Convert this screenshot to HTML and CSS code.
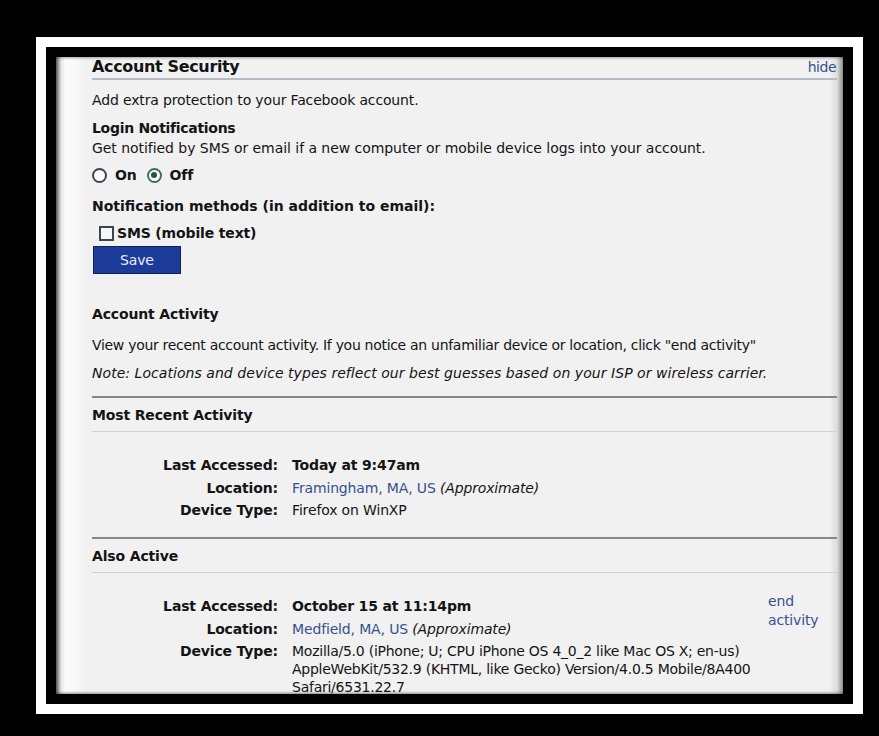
FILE: index.html
```html
<!DOCTYPE html>
<html lang="en">
<head>
<meta charset="utf-8">
<title>Account Security</title>
<link rel="stylesheet" href="styles.css">
</head>
<body>
<div class="stage">
  <div class="mat">
    <div class="panel">
      <div class="sheet">
        <div class="sec-head">
          <h1 class="sec-title">Account Security</h1>
          <a class="link hide-link" href="#">hide</a>
        </div>
        <p class="intro">Add extra protection to your Facebook account.</p>

        <h2 class="label-title login-title">Login Notifications</h2>
        <p class="hint">Get notified by SMS or email if a new computer or mobile device logs into your account.</p>

        <div class="radios">
          <span class="radio"></span><span class="radio-label">On</span>
          <span class="radio checked"></span><span class="radio-label">Off</span>
        </div>

        <h2 class="label-title methods-title">Notification methods (in addition to email):</h2>
        <div class="check-row">
          <span class="checkbox"></span><span class="check-label">SMS (mobile text)</span>
        </div>
        <button class="save-btn" type="button">Save</button>

        <h2 class="label-title activity-title">Account Activity</h2>
        <p class="activity-text">View your recent account activity. If you notice an unfamiliar device or location, click "end activity"</p>
        <p class="note">Note: Locations and device types reflect our best guesses based on your ISP or wireless carrier.</p>

        <div class="block recent">
          <h3 class="block-title">Most Recent Activity</h3>
          <dl class="session">
            <dt>Last Accessed:</dt>
            <dd class="strong">Today at 9:47am</dd>
            <dt>Location:</dt>
            <dd><a class="link" href="#">Framingham, MA, US</a> <em>(Approximate)</em></dd>
            <dt>Device Type:</dt>
            <dd>Firefox on WinXP</dd>
          </dl>
        </div>

        <div class="block also">
          <h3 class="block-title">Also Active</h3>
          <dl class="session">
            <dt>Last Accessed:</dt>
            <dd class="strong">October 15 at 11:14pm</dd>
            <dd class="end"><a class="link" href="#">end activity</a></dd>
            <dt>Location:</dt>
            <dd><a class="link" href="#">Medfield, MA, US</a> <em>(Approximate)</em></dd>
            <dt>Device Type:</dt>
            <dd class="agent">Mozilla/5.0 (iPhone; U; CPU iPhone OS 4_0_2 like Mac OS X; en-us) AppleWebKit/532.9 (KHTML, like Gecko) Version/4.0.5 Mobile/8A400 Safari/6531.22.7</dd>
          </dl>
        </div>
      </div>
    </div>
  </div>
</div>
</body>
</html>
```
FILE: styles.css
```css
* { box-sizing: border-box; }

html, body {
  margin: 0;
  background: #000;
}

body {
  font-family: "DejaVu Sans", "Liberation Sans", sans-serif;
  font-size: 14px;
  line-height: 18px;
  letter-spacing: -0.15px;
  color: #141414;
}

/* black backdrop with a white mat and a black inner edge */
.stage {
  padding: 37px 16px 22px 36px;
}

.mat {
  border: 10px solid #fff;
}

.panel {
  border: 10px solid #000;
  height: 657px;
  overflow: hidden;
  background:
    linear-gradient(to right,
      #585858 0,
      #e4e4e4 5px,
      #fbfbfb 9px,
      #f8f8f8 20px,
      #f1f1f1 30px,
      #f1f1f1 calc(100% - 14px),
      #dedede calc(100% - 6px),
      #8e8e8e 100%);
  box-shadow: inset 0 3px 3px -2px rgba(0,0,0,.35), inset 0 -3px 3px -2px rgba(0,0,0,.45);
}

.sheet {
  padding: 0 6px 0 36px;
}

.link {
  color: #35528f;
  text-decoration: none;
}

/* section header */
.sec-head {
  display: flex;
  justify-content: space-between;
  align-items: baseline;
  height: 23px;
  border-bottom: 2px solid #b6bcc6;
}

.sec-title {
  margin: 0;
  font-size: 16px;
  line-height: 20px;
  letter-spacing: -0.35px;
  font-weight: bold;
}

.hide-link {
  font-size: 14px;
  letter-spacing: -0.5px;
  margin-right: 1px;
}

p { margin: 0; }

.intro { margin-top: 11px; }

.label-title {
  margin: 0;
  font-size: 14px;
  line-height: 18px;
  font-weight: bold;
}

.login-title { margin-top: 10px; letter-spacing: -0.3px; }
.hint { margin-top: 2px; letter-spacing: -0.05px; }

/* radios */
.radios {
  display: flex;
  align-items: center;
  margin-top: 9px;
  height: 18px;
}

.radio {
  width: 15px;
  height: 15px;
  border: 2px solid #3a4658;
  border-radius: 50%;
  background: #fcfcfc;
  display: flex;
  align-items: center;
  justify-content: center;
}

.radio.checked { border-color: #3d6f62; }

.radio.checked::after {
  content: "";
  width: 6px;
  height: 6px;
  border-radius: 50%;
  background: #1f5a3a;
}

.radio-label {
  font-weight: bold;
  margin: 0 10px 0 8px;
}

.methods-title { margin-top: 13px; letter-spacing: 0; }

.check-row {
  display: flex;
  align-items: center;
  margin: 9px 0 0 7px;
  height: 18px;
}

.checkbox {
  width: 15px;
  height: 15px;
  border: 2px solid #3b4452;
  background: #f6f6f6;
  margin-right: 3px;
}

.check-label { font-weight: bold; }

.save-btn {
  display: block;
  margin: 4px 0 0 1px;
  width: 88px;
  height: 28px;
  padding: 0 0 0 26px;
  text-align: left;
  font: inherit;
  letter-spacing: -0.15px;
  font-size: 14px;
  color: #e6ecff;
  background: #1d3b98;
  border: 1px solid #0c215f;
  border-radius: 0;
}

.activity-title { margin-top: 31px; }
.activity-text { margin-top: 13px; letter-spacing: -0.3px; }

.note {
  margin-top: 10px;
  font-style: italic;
  letter-spacing: 0.05px;
}

/* activity blocks */
.block {
  border-top: 2px solid #878787;
}

.recent { margin-top: 14px; }
.also { margin-top: 18px; }

.block-title {
  margin: 0;
  padding: 8px 0 7px;
  font-size: 14px;
  line-height: 18px;
  font-weight: bold;
  border-bottom: 1px solid #d2d2d2;
}

.session {
  display: grid;
  grid-template-columns: 200px 476px auto;
  row-gap: 4.5px;
  margin: 24px 0 0;
}

.session dt {
  grid-column: 1;
  padding-right: 14px;
  text-align: right;
  font-weight: bold;
}

.session dd {
  grid-column: 2;
  margin: 0;
}

.session dd.strong { font-weight: bold; }

.session dd.agent { letter-spacing: -0.25px; }

.session dd.end {
  grid-column: 3;
  grid-row: 1 / span 2;
  width: 56px;
  margin-top: -5px;
  line-height: 19px;
}

.session em { font-style: italic; }
```
